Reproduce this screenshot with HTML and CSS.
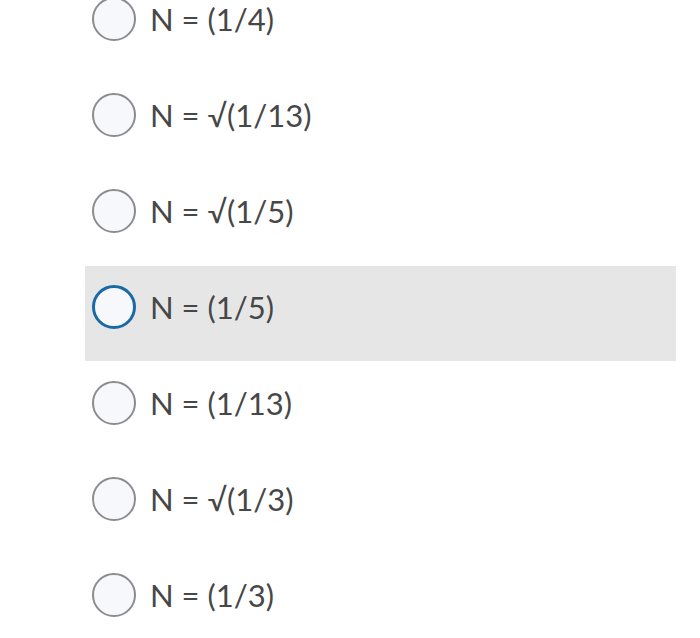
FILE: index.html
```html
<!DOCTYPE html>
<html lang="en">
<head>
  <meta charset="UTF-8" />
  <title>Choices</title>
  <link rel="stylesheet" href="styles.css">
</head>
<body>
  <ul class="choices">
    <li class="choice"><span class="radio"></span><span class="label">N = (1/4)</span></li>
    <li class="choice"><span class="radio"></span><span class="label">N = √(1/13)</span></li>
    <li class="choice"><span class="radio"></span><span class="label">N = √(1/5)</span></li>
    <li class="choice active"><span class="radio"></span><span class="label">N = (1/5)</span></li>
    <li class="choice"><span class="radio"></span><span class="label">N = (1/13)</span></li>
    <li class="choice"><span class="radio"></span><span class="label">N = √(1/3)</span></li>
    <li class="choice"><span class="radio"></span><span class="label">N = (1/3)</span></li>
  </ul>
</body>
</html>
```
FILE: styles.css
```css
body {
  margin: 0;
  background: #fff;
  font-family: Lato, "Open Sans", sans-serif;
  overflow: hidden;
}
.choices {
  list-style: none;
  margin: -29px 0 0 85px;
  padding: 0;
  width: 591px;
}
.choice {
  height: 96px;
  display: flex;
  align-items: center;
  gap: 14px;
  padding-left: 7px;
}
.choice.active {
  background: #e6e6e6;
  box-sizing: border-box;
  height: 95px;
  margin: 7px 0 -6px;
  padding-top: 19px;
  align-items: flex-start;
}
.radio {
  flex: none;
  width: 44px;
  height: 44px;
  box-sizing: border-box;
  border: 2px solid #8c8c8c;
  border-radius: 50%;
  background: #f7f8fc;
}
.active .radio {
  border: 3px solid #1b6aa5;
}
.label {
  font-size: 31px;
  line-height: 44px;
  color: #474747;
}
```
